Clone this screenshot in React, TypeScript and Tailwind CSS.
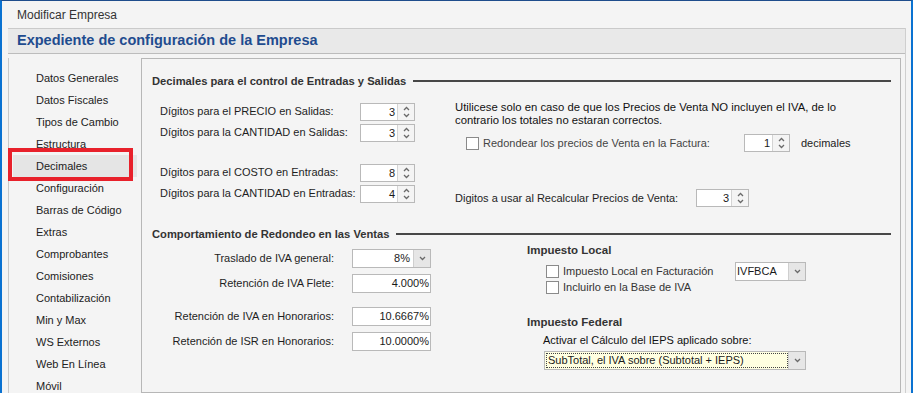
import React from "react";

function Chevron({ dir }: { dir: "up" | "down" }) {
  return (
    <svg width="7" height="5" viewBox="0 0 7 5" className="block">
      {dir === "up" ? (
        <path d="M1 4 L3.5 1.5 L6 4" fill="none" stroke="#6a6a6a" strokeWidth="1.3" />
      ) : (
        <path d="M1 1 L3.5 3.5 L6 1" fill="none" stroke="#6a6a6a" strokeWidth="1.3" />
      )}
    </svg>
  );
}

function Spin({ value, w }: { value: string; w: string }) {
  return (
    <div className={`flex h-[18px] ${w} border border-[#b9b9b9] bg-white`}>
      <div className="flex-1 text-right pr-[2px] leading-[16px] text-[#1a1a1a]">{value}</div>
      <div className="w-[17px] border-l border-[#d4d4d4] bg-[#f4f4f4] flex flex-col items-center justify-center gap-[2px]">
        <Chevron dir="up" />
        <Chevron dir="down" />
      </div>
    </div>
  );
}

function Box({ value }: { value: string }) {
  return (
    <div className="h-[19px] w-[79px] border border-[#b9b9b9] bg-white text-right pr-[1px] leading-[17px] text-[#1a1a1a]">
      {value}
    </div>
  );
}

function Combo({ value, w, left, yellow }: { value: string; w: string; left?: boolean; yellow?: boolean }) {
  return (
    <div className={`flex h-[19px] ${w} border border-[#b9b9b9] ${yellow ? "bg-[#ffffe1]" : "bg-white"}`}>
      <div className={`flex-1 flex items-center ${left ? "justify-start pl-[1px]" : "justify-end pr-[3px]"} min-w-0`}>
        {yellow ? (
          <span className="border border-dotted border-[#444] leading-[13px] px-[1px] w-full text-[#1a1a1a]">{value}</span>
        ) : (
          <span className="leading-[17px] text-[#1a1a1a]">{value}</span>
        )}
      </div>
      <div className="w-[17px] border-l border-[#cfcfcf] bg-[#e6e6e6] flex items-center justify-center">
        <Chevron dir="down" />
      </div>
    </div>
  );
}

function Check() {
  return <div className="w-[13px] h-[13px] border border-[#8a8a8a] bg-white shrink-0" />;
}

const menu = [
  "Datos Generales",
  "Datos Fiscales",
  "Tipos de Cambio",
  "Estructura",
  "Decimales",
  "Configuración",
  "Barras de Código",
  "Extras",
  "Comprobantes",
  "Comisiones",
  "Contabilización",
  "Min y Max",
  "WS Externos",
  "Web En Línea",
  "Móvil",
];

export default function App() {
  return (
    <div className="w-[913px] h-[393px] overflow-hidden bg-[#f4f4f4] border-t border-t-[#1f4d8c] border-l-2 border-r-2 border-l-[#0a72d1] border-r-[#0a72d1] flex flex-col font-['Liberation_Sans',sans-serif] text-[11px] text-[#1e1e1e] relative">
      {/* title bar */}
      <div className="h-[27px] shrink-0 pl-[15px] flex items-center text-[12px] text-[#333]">Modificar Empresa</div>

      {/* body */}
      <div className="flex-1 min-h-0 flex flex-col ml-[6px] mr-[5px] border-r border-[#cfcfcf]">
        <div className="h-[26px] shrink-0 bg-[#e9e9e9] border-t border-b border-t-[#cacaca] border-b-[#bcbcbc] flex items-center pl-[9px]">
          <span className="text-[14.5px] font-bold text-[#1f4c8f]">Expediente de configuración de la Empresa</span>
        </div>

        <div className="flex flex-1 min-h-0 mt-[4px]">
          {/* sidebar */}
          <div className="w-[133px] shrink-0 border-l border-[#c8c8c8] pt-[9px] text-[#222] relative">
            {menu.map((m) => (
              <div
                key={m}
                className={`h-[22px] flex items-center ${m === "Decimales" ? "bg-[#e5e5e5] mx-[4px] pl-[23px]" : "pl-[27px]"}`}
              >
                {m}
              </div>
            ))}
            <div className="absolute left-[-1px] top-[90px] w-[125px] h-[33px] border-[4px] border-[#e8212b]" />
          </div>

          {/* main panel */}
          <div className="flex-1 min-w-0 border border-[#b7b7b7] mr-[4px] flex flex-col">
            {/* section 1 title */}
            <div className="mt-[13px] h-[18px] flex items-center pl-[10px] pr-[9px]">
              <span className="text-[11.2px] font-bold text-[#333]">Decimales para el control de Entradas y Salidas</span>
              <div className="flex-1 h-[2px] bg-[#474747] ml-[7px]" />
            </div>

            <div className="flex mt-[11px]">
              <div className="pl-[18px] flex flex-col">
                <div className="h-[21px] flex items-center">
                  <span className="w-[200px]">Dígitos para el PRECIO en Salidas:</span>
                  <Spin value="3" w="w-[55px]" />
                </div>
                <div className="h-[21px] flex items-center">
                  <span className="w-[200px]">Dígitos para la CANTIDAD en Salidas:</span>
                  <Spin value="3" w="w-[55px]" />
                </div>
                <div className="h-[21px] flex items-center mt-[19px]">
                  <span className="w-[200px]">Dígitos para el COSTO en Entradas:</span>
                  <Spin value="8" w="w-[55px]" />
                </div>
                <div className="h-[21px] flex items-center">
                  <span className="w-[200px]">Dígitos para la CANTIDAD en Entradas:</span>
                  <Spin value="4" w="w-[55px]" />
                </div>
              </div>

              <div className="ml-[40px] flex flex-col">
                <div className="leading-[13px] text-[#111] text-[11.3px]">
                  Utilicese solo en caso de que los Precios de Venta NO incluyen el IVA, de lo
                  <br />
                  contrario los totales no estaran correctos.
                </div>
                <div className="h-[18px] mt-[7px] flex items-center pl-[11px]">
                  <Check />
                  <span className="ml-[4px] w-[261px] text-[#444]">Redondear los precios de Venta en la Factura:</span>
                  <Spin value="1" w="w-[46px]" />
                  <span className="ml-[11px] text-[#222]">decimales</span>
                </div>
                <div className="h-[18px] mt-[37px] flex items-center">
                  <span className="w-[241px]">Digitos a usar al Recalcular Precios de Venta:</span>
                  <Spin value="3" w="w-[53px]" />
                </div>
              </div>
            </div>

            {/* section 2 title */}
            <div className="mt-[18px] h-[18px] flex items-center pl-[10px] pr-[9px]">
              <span className="text-[11.2px] font-bold text-[#333]">Comportamiento de Redondeo en las Ventas</span>
              <div className="flex-1 h-[2px] bg-[#474747] ml-[7px]" />
            </div>

            <div className="flex">
              <div className="flex flex-col pt-[3px]">
                <div className="h-[25px] flex items-center">
                  <span className="w-[192px] text-right">Traslado de IVA general:</span>
                  <div className="ml-[18px]">
                    <Combo value="8%" w="w-[79px]" />
                  </div>
                </div>
                <div className="h-[25px] flex items-center">
                  <span className="w-[192px] text-right">Retención de IVA Flete:</span>
                  <div className="ml-[18px]">
                    <Box value="4.000%" />
                  </div>
                </div>
                <div className="h-[25px] flex items-center mt-[8px]">
                  <span className="w-[192px] text-right">Retención de IVA en Honorarios:</span>
                  <div className="ml-[18px]">
                    <Box value="10.6667%" />
                  </div>
                </div>
                <div className="h-[25px] flex items-center">
                  <span className="w-[192px] text-right">Retención de ISR en Honorarios:</span>
                  <div className="ml-[18px]">
                    <Box value="10.0000%" />
                  </div>
                </div>
              </div>

              <div className="ml-[96px] flex flex-col">
                <div className="h-[16px] flex items-center text-[11.5px] font-bold text-[#333]">Impuesto Local</div>
                <div className="h-[18px] mt-[3px] flex items-center pl-[19px]">
                  <Check />
                  <span className="ml-[4px] w-[172px] text-[#333]">Impuesto Local en Facturación</span>
                  <Combo value="IVFBCA" w="w-[71px]" left />
                </div>
                <div className="h-[15px] flex items-center pl-[19px]">
                  <Check />
                  <span className="ml-[4px] text-[#333]">Incluirlo en la Base de IVA</span>
                </div>
                <div className="h-[16px] mt-[20px] flex items-center text-[11.5px] font-bold text-[#333]">Impuesto Federal</div>
                <div className="h-[16px] mt-[1px] flex items-center pl-[16px] text-[#111]">
                  Activar el Cálculo del IEPS aplicado sobre:
                </div>
                <div className="mt-[3px] ml-[17px]">
                  <Combo value="SubTotal, el IVA sobre (Subtotal + IEPS)" w="w-[262px]" left yellow />
                </div>
              </div>
            </div>
          </div>
        </div>
      </div>
    </div>
  );
}
